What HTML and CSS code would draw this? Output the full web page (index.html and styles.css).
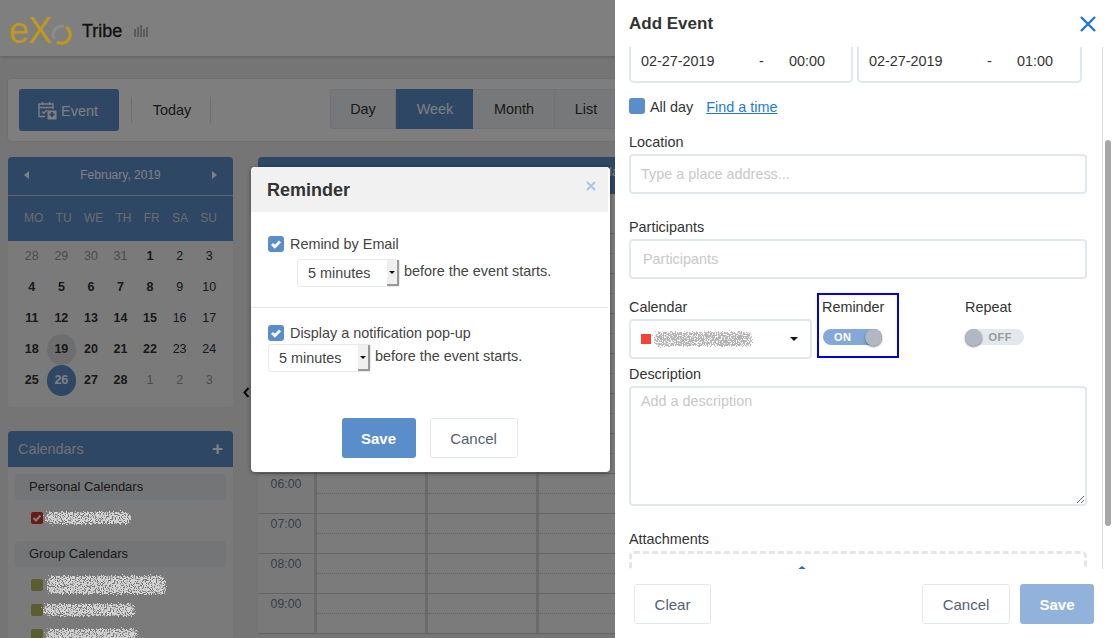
FILE: index.html
```html
<!DOCTYPE html>
<html lang="en">
<head>
    <meta charset="UTF-8">
    <meta name="viewport" content="width=device-width, initial-scale=1.0">
    <title>Add Event</title>
    <link rel="stylesheet" href="styles.css">
</head>
<body>
    <svg class="defs" width="0" height="0" aria-hidden="true">
        <filter id="speckle" x="-10%" y="-30%" width="120%" height="160%">
            <feTurbulence type="fractalNoise" baseFrequency="0.85" numOctaves="2" seed="4" result="noise"/>
            <feDisplacementMap in="SourceGraphic" in2="noise" scale="7" xChannelSelector="R" yChannelSelector="G" result="rough"/>
            <feColorMatrix in="noise" type="matrix" values="0 0 0 0 0  0 0 0 0 0  0 0 0 0 0  0 0 0 -9 5.600" result="holes"/>
            <feComposite in="rough" in2="holes" operator="in"/>
        </filter>
    </svg>

    <div class="app">
        <header class="topbar">
            <div class="logo">
                <span class="logo-text">eX</span>
                <svg class="logo-ring" width="21" height="21" viewBox="0 0 21 21">
                    <path d="M13 2.400 A8.500 8.500 0 0 0 3.500 15" fill="none" stroke="#8c8c8c" stroke-width="3"/>
                    <path d="M15 3 A8.500 8.500 0 0 1 6 18" fill="none" stroke="#bf9a1a" stroke-width="3"/>
                </svg>
            </div>
            <span class="brand">Tribe</span>
            <svg class="brand-bars" width="15" height="12" viewBox="0 0 15 12">
                <path d="M1 4v8M4 2v10M7 0v12M10 4v8M13 2v10" stroke="#b8b8b8" stroke-width="2"/>
            </svg>
        </header>

        <div class="content">
            <div class="toolbar">
                <button class="event-btn">
                    <svg width="19" height="19" viewBox="0 0 19 19" fill="none" stroke="#fff" stroke-width="1.400">
                        <path d="M7 15.500H1V3h14v5M1 6.500h14M4.500 1v3M11.500 1v3M4 10.500l1.800 1.800L9 9"/>
                        <rect x="9.500" y="9.500" width="9" height="9" fill="#fff" stroke="none"/>
                        <path d="M14 11v5M11.500 13.500h5" stroke="#5a8ecb" stroke-width="1.800"/>
                    </svg>
                    <span>Event</span>
                </button>
                <span class="tool-sep"></span>
                <button class="today-btn">Today</button>
                <span class="tool-sep"></span>
                <div class="views">
                    <span class="view view-day">Day</span>
                    <span class="view view-week active">Week</span>
                    <span class="view view-month">Month</span>
                    <span class="view view-list">List</span>
                </div>
            </div>

            <div class="main">
                <aside class="sidebar">
                    <section class="minical">
                        <div class="minical-head">
                            <span class="tri tri-left"></span>
                            <span>February, 2019</span>
                            <span class="tri tri-right"></span>
                        </div>
                        <div class="minical-names">
                            <span>MO</span><span>TU</span><span>WE</span><span>TH</span><span>FR</span><span>SA</span><span>SU</span>
                        </div>
                        <div class="minical-days">
                            <span class="off">28</span><span class="off">29</span><span class="off">30</span><span class="off">31</span><b>1</b><span>2</span><span>3</span>
                            <b>4</b><b>5</b><b>6</b><b>7</b><b>8</b><span>9</span><span>10</span>
                            <b>11</b><b>12</b><b>13</b><b>14</b><b>15</b><span>16</span><span>17</span>
                            <b>18</b><b class="today">19</b><b>20</b><b>21</b><b>22</b><span>23</span><span>24</span>
                            <b>25</b><b class="picked">26</b><b>27</b><b>28</b><span class="off">1</span><span class="off">2</span><span class="off">3</span>
                        </div>
                    </section>

                    <section class="calendars">
                        <div class="calendars-head"><span>Calendars</span><span class="plus">+</span></div>
                        <div class="calendars-body">
                            <div class="cal-group">Personal Calendars</div>
                            <ul class="cal-list">
                                <li>
                                    <span class="cal-box red">
                                        <svg width="12" height="12" viewBox="0 0 12 12"><path d="M2.500 6l2.500 2.500 4.500-5" fill="none" stroke="#fff" stroke-width="2"/></svg>
                                    </span>
                                    <span class="smudge smudge-a"></span>
                                </li>
                            </ul>
                            <div class="cal-group">Group Calendars</div>
                            <ul class="cal-list">
                                <li><span class="cal-box olive"></span><span class="smudge smudge-b"></span></li>
                                <li><span class="cal-box olive"></span><span class="smudge smudge-c"></span></li>
                                <li><span class="cal-box olive"></span><span class="smudge smudge-d"></span></li>
                            </ul>
                        </div>
                    </section>
                </aside>

                <span class="collapse">
                    <svg width="7" height="11" viewBox="0 0 7 11"><path d="M5.500 1L1.500 5.500l4 4.500" fill="none" stroke="#111" stroke-width="2"/></svg>
                </span>

                <section class="week">
                    <div class="week-head"><span>Wednesday</span></div>
                    <div class="week-row"><div class="time"></div><div class="cell"></div><div class="cell"></div><div class="cell"></div></div>
                    <div class="week-row"><div class="time"></div><div class="cell"><i></i></div><div class="cell"><i></i></div><div class="cell"><i></i></div></div>
                    <div class="week-row"><div class="time"></div><div class="cell"><i></i></div><div class="cell"><i></i></div><div class="cell"><i></i></div></div>
                    <div class="week-row"><div class="time"></div><div class="cell"><i></i></div><div class="cell"><i></i></div><div class="cell"><i></i></div></div>
                    <div class="week-row"><div class="time"></div><div class="cell"><i></i></div><div class="cell"><i></i></div><div class="cell"><i></i></div></div>
                    <div class="week-row"><div class="time"></div><div class="cell"><i></i></div><div class="cell"><i></i></div><div class="cell"><i></i></div></div>
                    <div class="week-row"><div class="time"></div><div class="cell"><i></i></div><div class="cell"><i></i></div><div class="cell"><i></i></div></div>
                    <div class="week-row"><div class="time">06:00</div><div class="cell"><i></i></div><div class="cell"><i></i></div><div class="cell"><i></i></div></div>
                    <div class="week-row"><div class="time">07:00</div><div class="cell"><i></i></div><div class="cell"><i></i></div><div class="cell"><i></i></div></div>
                    <div class="week-row"><div class="time">08:00</div><div class="cell"><i></i></div><div class="cell"><i></i></div><div class="cell"><i></i></div></div>
                    <div class="week-row"><div class="time">09:00</div><div class="cell"><i></i></div><div class="cell"><i></i></div><div class="cell"><i></i></div></div>
                </section>
            </div>
        </div>
    </div>

    <div class="dim"></div>

    <div class="modal">
        <div class="modal-head">
            <h3>Reminder</h3>
            <svg width="10" height="10" viewBox="0 0 10 10"><path d="M1 1l8 8M9 1l-8 8" stroke="#a9c6e4" stroke-width="2"/></svg>
        </div>
        <div class="modal-section first">
            <label class="check-line"><span class="check">
                <svg width="16" height="16" viewBox="0 0 16 16"><path d="M4 8l2.800 2.800L12 5.500" fill="none" stroke="#fff" stroke-width="2.800"/></svg>
            </span>Remind by Email</label>
            <div class="before indented">
                <div class="fake-select"><span>5 minutes</span><span class="fake-arrow"></span></div>
                <span>before the event starts.</span>
            </div>
        </div>
        <div class="modal-section second">
            <label class="check-line"><span class="check">
                <svg width="16" height="16" viewBox="0 0 16 16"><path d="M4 8l2.800 2.800L12 5.500" fill="none" stroke="#fff" stroke-width="2.800"/></svg>
            </span>Display a notification pop-up</label>
            <div class="before">
                <div class="fake-select"><span>5 minutes</span><span class="fake-arrow"></span></div>
                <span>before the event starts.</span>
            </div>
        </div>
        <div class="modal-foot">
            <button class="btn btn-primary">Save</button>
            <button class="btn btn-cancel">Cancel</button>
        </div>
    </div>

    <aside class="drawer">
        <div class="drawer-head">
            <h2>Add Event</h2>
            <svg width="18" height="18" viewBox="0 0 18 18"><path d="M2 2l14 14M16 2L2 16" stroke="#1a78d8" stroke-width="2.400"/></svg>
        </div>

        <div class="drawer-body">
            <div class="dates">
                <div class="date-box"><span>02-27-2019</span><span>-</span><span>00:00</span></div>
                <div class="date-box wide"><span>02-27-2019</span><span>-</span><span>01:00</span></div>
            </div>

            <div class="allday">
                <span class="check"></span>
                <span class="allday-text">All day</span>
                <a class="allday-text" href="#">Find a time</a>
            </div>

            <label class="field-label location">Location</label>
            <input class="field" type="text" placeholder="Type a place address...">

            <label class="field-label participants">Participants</label>
            <input class="field field-people" type="text" placeholder="Participants">

            <div class="options">
                <div class="opt-calendar">
                    <label class="field-label">Calendar</label>
                    <div class="calendar-select">
                        <span class="red-dot"></span>
                        <span class="smudge smudge-select"></span>
                        <span class="caret"></span>
                    </div>
                </div>
                <div class="opt-reminder">
                    <label class="field-label">Reminder</label>
                    <div class="toggle on"><span class="toggle-text">ON</span><span class="knob"></span></div>
                </div>
                <div class="opt-repeat">
                    <label class="field-label">Repeat</label>
                    <div class="toggle off"><span class="knob"></span><span class="toggle-text">OFF</span></div>
                </div>
            </div>

            <label class="field-label description">Description</label>
            <textarea class="field field-text" placeholder="Add a description"></textarea>

            <label class="field-label attachments">Attachments</label>
            <div class="dropzone"><span class="up-tip"></span></div>
        </div>

        <div class="scroll-track"></div>
        <div class="scroll-thumb"></div>

        <div class="drawer-foot">
            <button class="btn btn-cancel btn-clear">Clear</button>
            <button class="btn btn-cancel">Cancel</button>
            <button class="btn btn-primary btn-faded">Save</button>
        </div>
    </aside>
</body>
</html>
```

FILE: styles.css
```css
* {
    box-sizing: border-box;
}

body {
    margin: 0;
    width: 1112px;
    height: 638px;
    overflow: hidden;
    font-family: "Liberation Sans", Arial, sans-serif;
    font-size: 14.4px;
    color: #333;
    background: #ebebeb;
}

button {
    font-family: inherit;
    font-size: 14.4px;
}

.defs {
    position: absolute;
}

.app {
    height: 638px;
    overflow: hidden;
}

.dim {
    position: absolute;
    top: 0;
    left: 0;
    right: 0;
    bottom: 0;
    z-index: 1;
    background: rgba(0, 0, 0, 0.5);
}

/* top bar */
.topbar {
    display: flex;
    align-items: center;
    height: 56px;
    padding: 6px 0 0 9px;
    background: #fff;
    box-shadow: 0 1px 3px rgba(0, 0, 0, 0.2);
}

.logo {
    display: flex;
    align-items: flex-end;
    position: relative;
    z-index: 2;
    width: 73px;
    height: 28px;
}

.logo-text {
    font-size: 36px;
    line-height: 28px;
    letter-spacing: -1px;
    color: #bf9a1a;
}

.brand {
    font-size: 18px;
    color: #222;
    -webkit-text-stroke: 0.3px #222;
}

.brand-bars {
    margin-left: 12px;
}

.content {
    padding: 23px 8px 0;
}

/* toolbar */
.toolbar {
    display: flex;
    align-items: flex-start;
    height: 62px;
    padding: 10px 11px;
    margin-bottom: 16px;
    background: #fcfcfc;
    border-radius: 3px;
    box-shadow: 0 0 2px rgba(0, 0, 0, 0.15);
}

.event-btn {
    display: flex;
    align-items: center;
    justify-content: center;
    gap: 4px;
    width: 100px;
    height: 42px;
    margin-right: 12px;
    padding: 0 2px 0 0;
    border: 0;
    border-radius: 3px;
    color: #fff;
    background: #5a8ecb;
}

.event-btn span {
    padding-top: 2px;
}

.tool-sep {
    width: 1px;
    height: 26px;
    margin-top: 8px;
    background: #ddd;
}

.today-btn {
    width: 78px;
    height: 42px;
    padding: 0 0 0 2px;
    border: 0;
    color: #333;
    background: none;
}

.views {
    display: flex;
    height: 40px;
    margin-left: 119px;
    border-radius: 3px;
    background: #eef0f3;
    box-shadow: inset 0 0 0 1px #e1e5ea;
}

.view {
    display: flex;
    align-items: center;
    justify-content: center;
    height: 40px;
    padding-left: 1px;
    border-right: 1px solid #e1e5ea;
    color: #333;
}

.view-day { width: 66px; }
.view-week { width: 77px; }
.view-month { width: 82px; }
.view-list { width: 62px; }

.view.active {
    color: #fff;
    background: #5a8ecb;
    border-right: 0;
}

.main {
    display: flex;
    gap: 25px;
    position: relative;
}

.sidebar {
    width: 225px;
    flex: none;
}

/* mini calendar */
.minical {
    height: 250px;
    margin-bottom: 24px;
    border-radius: 4px;
    background: #f5f5f5;
    overflow: hidden;
}

.minical-head {
    display: flex;
    align-items: center;
    justify-content: space-between;
    height: 39px;
    padding: 0 16px 2px;
    font-size: 12px;
    color: #fff;
    background: #5a8ecb;
    border-bottom: 1px solid #b7cde6;
}

.tri {
    width: 0;
    height: 0;
    border-top: 4.500px solid transparent;
    border-bottom: 4.500px solid transparent;
}

.tri-left { border-right: 5px solid #fff; }
.tri-right { border-left: 5px solid #fff; }

.minical-names {
    display: flex;
    align-items: center;
    justify-content: space-between;
    height: 45px;
    padding: 0 16px 2px;
    font-size: 12px;
    color: #d8d8d8;
    background: #5a8ecb;
}

.minical-days {
    display: grid;
    grid-template-columns: repeat(7, 1fr);
    grid-auto-rows: 31px;
    padding: 0 9px;
    font-size: 12.500px;
    text-align: center;
    line-height: 31px;
}

.minical-days .off {
    color: #999;
}

.minical-days .today {
    border-radius: 50%;
    background: #ddd;
}

.minical-days .picked {
    border-radius: 50%;
    color: #fff;
    background: #5a8ecb;
}

/* calendars list */
.calendars {
    min-height: 300px;
    border-radius: 4px;
    background: #f5f5f5;
    overflow: hidden;
}

.calendars-head {
    display: flex;
    align-items: center;
    justify-content: space-between;
    height: 36px;
    padding: 0 10px;
    color: #e0e0e0;
    background: #5a8ecb;
}

.plus {
    font-size: 19px;
    font-weight: bold;
    color: #fff;
}

.calendars-body {
    padding: 7px;
}

.cal-group {
    height: 26px;
    padding-left: 14px;
    line-height: 25px;
    font-size: 13px;
    border-radius: 3px;
    background: #e8ebef;
}

.cal-list {
    margin: 5px 0 11px;
    padding: 0 0 0 16px;
    list-style: none;
}

.cal-list li {
    display: flex;
    align-items: center;
    gap: 2px;
    height: 25px;
}

.cal-box {
    width: 12px;
    height: 12px;
    flex: none;
    border-radius: 2px;
}

.cal-box svg {
    display: block;
}

.red { background: #d2352f; }
.olive { background: #b4bc60; }

.smudge {
    display: block;
    position: relative;
    z-index: 2;
    height: 12px;
    border-radius: 6px;
    background: #d2d2d2;
    filter: url(#speckle);
}

.smudge-a { width: 86px; }
.smudge-b { width: 119px; height: 18px; margin-left: 2px; }
.smudge-c { width: 92px; margin-left: -2px; }
.smudge-d { width: 92px; margin-left: 1px; }

.collapse {
    position: absolute;
    left: 235px;
    top: 228px;
}

/* week grid */
.week {
    width: 389px;
    flex: none;
    border-radius: 4px 4px 0 0;
    overflow: hidden;
}

.week-head {
    display: grid;
    grid-template-columns: 56px 111px 111px 111px;
    height: 37px;
    line-height: 30px;
    font-size: 13px;
    text-align: center;
    color: #fff;
    background: #5a8ecb;
}

.week-head span {
    grid-column: 4;
}

.week-row {
    display: grid;
    grid-template-columns: 56px 111px 111px 111px;
    height: 40px;
    border-bottom: 1px solid #c8c8c8;
    background: #f6f6f6;
}

.time {
    padding-top: 3px;
    font-size: 12.300px;
    line-height: 15px;
    text-align: center;
    color: #6f7e92;
    background: #f3f3f3;
}

.cell {
    border-left: 3px solid #d6d6d6;
}

.cell i {
    display: block;
    height: 20px;
    border-bottom: 1px dotted #c8c8c8;
}

/* reminder dialog */
.modal {
    position: absolute;
    top: 167px;
    left: 251px;
    z-index: 3;
    width: 359px;
    height: 305px;
    padding-right: 2px;
    border-radius: 4px;
    background: #fff;
    color: #444;
    box-shadow: 0 1px 4px rgba(0, 0, 0, 0.4);
}

.modal-head {
    display: flex;
    align-items: center;
    justify-content: space-between;
    height: 45px;
    padding: 0 12px 7px 16px;
    border-radius: 4px 0 0 0;
    background: #f1f1f1;
}

.modal-head h3 {
    margin: 9px 0 0;
    font-size: 18px;
    color: #333;
}

.modal-section {
    padding-left: 17px;
}

.modal-section.first {
    height: 96px;
    padding-top: 24px;
    border-bottom: 1px solid #e8e8e8;
}

.modal-section.second {
    height: 110px;
    padding-top: 17px;
}

.check-line {
    display: flex;
    align-items: center;
    gap: 6px;
    height: 16px;
}

.check {
    display: block;
    width: 16px;
    height: 16px;
    flex: none;
    border-radius: 3px;
    background: #5a8ecb;
}

.check svg {
    display: block;
}

.before {
    display: flex;
    align-items: flex-start;
    gap: 4px;
    margin-top: 3px;
    line-height: 24px;
}

.first .before {
    margin-top: 7px;
}

.indented {
    margin-left: 29px;
}

.fake-select {
    display: flex;
    justify-content: space-between;
    width: 103px;
    height: 28px;
    padding-left: 10px;
    line-height: 27px;
    border: 1px solid #e6ebf0;
    border-radius: 3px;
}

.fake-arrow {
    position: relative;
    width: 12px;
    height: 26px;
    background: #efefef;
    border-right: 2px solid #999;
    border-bottom: 2px solid #999;
}

.fake-arrow::after {
    content: "";
    position: absolute;
    top: 11px;
    left: 2px;
    border-top: 3px solid #111;
    border-left: 3px solid transparent;
    border-right: 3px solid transparent;
}

.modal-foot {
    display: flex;
    justify-content: center;
    gap: 14px;
}

.btn {
    height: 40px;
    border-radius: 3px;
    font-size: 15px;
}

.btn-primary {
    width: 74px;
    border: 0;
    font-weight: bold;
    color: #fff;
    background: #5a8ecb;
}

.btn-cancel {
    width: 88px;
    color: #565e73;
    background: #fff;
    border: 1px solid #e1e8ee;
}

/* add event drawer */
.drawer {
    position: absolute;
    top: 0;
    right: 0;
    z-index: 3;
    display: flex;
    flex-direction: column;
    width: 497px;
    height: 638px;
    background: #fff;
}

.drawer-head {
    display: flex;
    align-items: center;
    justify-content: space-between;
    flex: none;
    height: 47px;
    padding: 0 15px 0 14px;
}

.drawer-head h2 {
    margin: 0;
    font-size: 17px;
    color: #333;
}

.drawer-body {
    flex: 1;
    min-height: 0;
    padding: 0 25px 0 14px;
    overflow: hidden;
}

.dates {
    display: flex;
    gap: 4px;
}

.date-box {
    display: grid;
    grid-template-columns: 118px 30px auto;
    align-items: center;
    width: 224px;
    height: 36px;
    padding: 0 0 6px 10px;
    border: 2px solid #e1e8ee;
    border-top: 0;
    border-radius: 0 0 5px 5px;
}

.date-box.wide {
    width: 225px;
}

.allday {
    display: flex;
    align-items: center;
    gap: 5px;
    height: 16px;
    margin-top: 15px;
}

.allday-text {
    padding-top: 2px;
}

.allday a {
    margin-left: 8px;
    color: #1f7ad6;
}

.field-label {
    display: block;
    height: 20px;
    line-height: 20px;
}

.location { margin: 18px 0 2px; }
.participants { margin: 23px 0 2px; }
.description { margin: 5px 0 2px; }
.attachments { margin: 23px 0 2px; }

.field {
    display: block;
    width: 458px;
    height: 40px;
    padding: 0 10px;
    font-family: inherit;
    font-size: 14.4px;
    background: #fff;
    border: 2px solid #e1e8ee;
    border-radius: 4px;
    outline: 0;
}

.field::placeholder {
    color: #c8c8c8;
}

.field-people {
    padding-left: 12px;
}

.field-text {
    height: 120px;
    padding-top: 5px;
}

.options {
    display: flex;
    height: 66px;
    margin-top: 14px;
}

.opt-calendar {
    width: 183px;
    padding-top: 4px;
}

.calendar-select {
    display: flex;
    align-items: center;
    height: 40px;
    margin-top: 2px;
    padding: 0 12px 0 10px;
    border: 2px solid #e1e8ee;
    border-radius: 4px;
}

.red-dot {
    width: 10px;
    height: 10px;
    flex: none;
    background: #f44336;
}

.smudge-select {
    width: 98px;
    height: 14px;
    margin-left: 3px;
    background: #b4b4b4;
}

.caret {
    margin-left: auto;
    border-top: 4px solid #111;
    border-left: 4px solid transparent;
    border-right: 4px solid transparent;
}

.opt-reminder {
    width: 82px;
    height: 65px;
    margin-left: 5px;
    padding: 2px 3px;
    border: 2px solid #0000e6;
}

.opt-reminder .toggle {
    margin-left: 1px;
}

.opt-repeat {
    margin-left: 66px;
    padding-top: 4px;
}

.toggle {
    display: flex;
    align-items: center;
    justify-content: space-between;
    width: 59px;
    height: 16px;
    margin-top: 12px;
    border-radius: 8px;
    font-size: 11px;
    font-weight: bold;
    letter-spacing: 0.5px;
}

.toggle.on {
    padding-left: 11px;
    color: #fff;
    background: #84a9d8;
}

.toggle.off {
    padding-right: 12px;
    color: #9a9a9a;
    background: #e1e8ee;
}

.knob {
    width: 17px;
    height: 17px;
    border-radius: 50%;
    background: #b1b8c3;
    box-shadow: 0 1px 2px rgba(0, 0, 0, 0.5);
}

.dropzone {
    position: relative;
    height: 40px;
    border-radius: 5px;
    border: 3px dashed #e6e6e6;
}

.up-tip {
    position: absolute;
    left: 165px;
    top: 12px;
    border-bottom: 4px solid #2a6db0;
    border-left: 5px solid transparent;
    border-right: 5px solid transparent;
}

.scroll-track {
    position: absolute;
    top: 47px;
    left: 487px;
    width: 1px;
    height: 522px;
    background: #ddd;
}

.scroll-thumb {
    position: absolute;
    top: 140px;
    left: 490px;
    width: 6px;
    height: 386px;
    border-radius: 3px;
    background: #a8a8a8;
}

.drawer-foot {
    display: flex;
    flex: none;
    gap: 10px;
    height: 69px;
    padding: 15px 18px 0 19px;
    background: #fff;
    position: relative;
}

.btn-clear {
    width: 77px;
    margin-right: auto;
}

.btn-faded {
    background: #91b3db;
}
```
